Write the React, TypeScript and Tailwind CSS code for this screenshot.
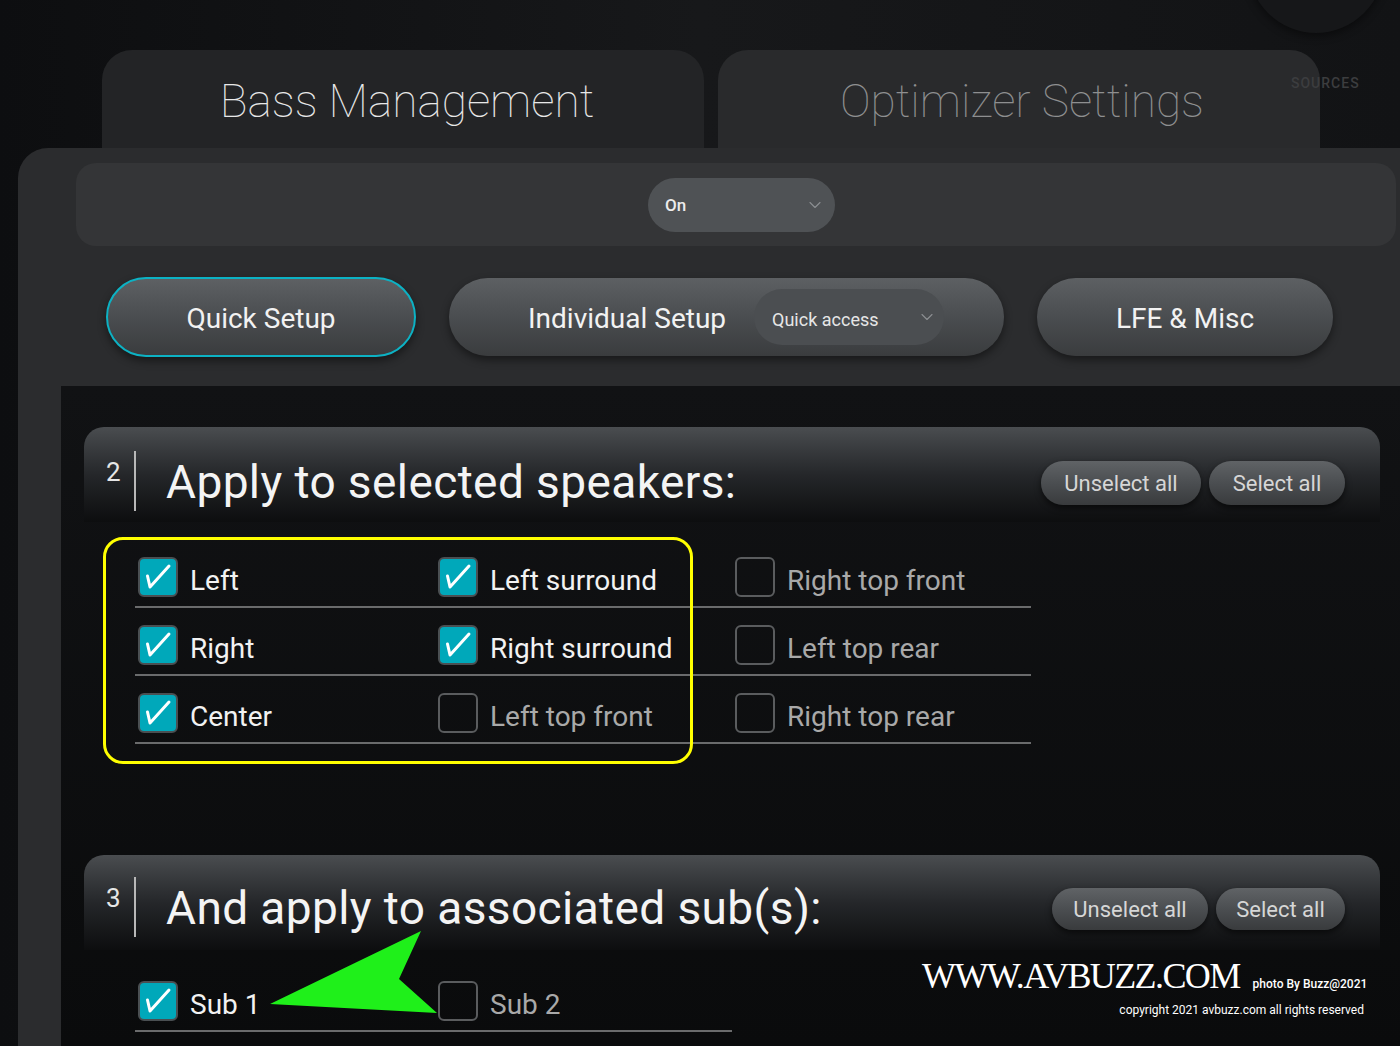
import React from "react";
import { ChevronDown } from "lucide-react";

const font = "font-['Roboto',sans-serif]";

function Check({ checked }: { checked: boolean }) {
  if (checked) {
    return (
      <div className="w-[40px] h-[40px] shrink-0 rounded-[6px] bg-[#00a8ba] border-2 border-[#4a4f52] flex items-center justify-center">
        <svg width="36" height="36" viewBox="0 0 36 36">
          <path d="M7.5 17 L10 28 L29 7" fill="none" stroke="#ffffff" strokeWidth="3" strokeLinecap="round" strokeLinejoin="round" />
        </svg>
      </div>
    );
  }
  return <div className="w-[40px] h-[40px] shrink-0 rounded-[6px] border-2 border-[#5a5c5e]" />;
}

function Cell({ label, checked, w }: { label: string; checked: boolean; w: string }) {
  return (
    <div className={`${w} flex items-center gap-[12px] pl-[3px]`}>
      <Check checked={checked} />
      <span className={`text-[28px] leading-none mt-[8px] ${checked ? "text-[#f2f2f2]" : "text-[#a9a9a9]"}`}>{label}</span>
    </div>
  );
}

function SmallPill({ label, w, h }: { label: string; w: string; h: string }) {
  return (
    <div
      className={`${w} ${h} rounded-full bg-gradient-to-b from-[#606366] via-[#4b4e51] to-[#393b3d] shadow-[0_3px_6px_rgba(0,0,0,0.6)] flex items-center justify-center text-[22px] text-[#d6d6d6]`}
    >
      {label}
    </div>
  );
}

function SectionHeader({ num, title, pt, btnTop, u, s, bh }: { num: string; title: string; pt: string; btnTop: string; u: string; s: string; bh: string }) {
  return (
    <div className={`h-[95px] rounded-t-[20px] bg-gradient-to-b from-[#4a4d50] via-[#25272a] to-[#0d0e0f] ${pt} pl-[22px] pr-[35px] flex items-start`}>
      <div className="w-[28px] text-[26px] leading-none text-[#e6e6e6] mt-[8px]">{num}</div>
      <div className="w-[2px] h-[60px] bg-[#b8b8b8]" />
      <div className="ml-[30px] h-[60px] flex items-center text-[46px] tracking-[0.4px] leading-none text-[#f4f4f4] pt-[2px]">{title}</div>
      <div className={`ml-auto ${btnTop} flex gap-[8px]`}>
        <SmallPill label="Unselect all" w={u} h={bh} />
        <SmallPill label="Select all" w={s} h={bh} />
      </div>
    </div>
  );
}

function BigButton({ children, w, h, cyan, extra }: { children: React.ReactNode; w: string; h: string; cyan?: boolean; extra?: string }) {
  return (
    <div
      className={`${w} ${h} rounded-full bg-gradient-to-b from-[#5d6063] via-[#4a4d50] to-[#3a3c3e] shadow-[0_4px_8px_rgba(0,0,0,0.45)] flex items-center text-[28px] text-[#f2f2f2] pt-[3px] ${cyan ? "border-2 border-[#0cb2c4]" : ""} ${extra ?? "justify-center"}`}
    >
      {children}
    </div>
  );
}

export default function App() {
  const rows: [string, boolean][][] = [
    [["Left", true], ["Left surround", true], ["Right top front", false]],
    [["Right", true], ["Right surround", true], ["Left top rear", false]],
    [["Center", true], ["Left top front", false], ["Right top rear", false]],
  ];
  return (
    <div className={`relative w-[1400px] h-[1046px] overflow-hidden flex flex-col bg-gradient-to-r from-[#0d0e10] via-[#17181a] to-[#121315] ${font}`}>
      {/* decorative background circle */}
      <div className="absolute left-[1248px] top-[-112px] w-[136px] h-[145px] rounded-full bg-[#161719] shadow-[0_3px_8px_rgba(0,0,0,0.45)]" />

      {/* tabs */}
      <div className="relative h-[148px] shrink-0 pt-[50px] pl-[102px] flex gap-[14px]">
        <div className="w-[602px] h-[98px] rounded-t-[30px] bg-[#232426] flex items-center justify-center">
          <span className="text-[46px] font-thin leading-none text-[#e8e8e8] pt-[4px] ml-[8px]">Bass Management</span>
        </div>
        <div className="w-[602px] h-[98px] rounded-t-[30px] bg-[#292a2c] flex items-center justify-center">
          <span className="text-[46px] font-thin leading-none text-[#8e8f90] pt-[4px] ml-[6px]">Optimizer Settings</span>
        </div>
        <div className="absolute left-[1291px] top-[76px] text-[14px] leading-none tracking-[1px] text-[#3c3d3f] font-medium">SOURCES</div>
      </div>

      {/* main panel */}
      <div className="relative ml-[18px] flex-1 rounded-tl-[30px] bg-[#2b2c2e] flex flex-col">
        <div className="pt-[15px] pl-[58px] pr-[4px]">
          <div className="h-[83px] rounded-[20px] bg-[#343537] flex items-center">
            <div className="ml-[572px] w-[187px] h-[54px] rounded-full bg-[#4f5255] flex items-center pl-[17px] pr-[10px]">
              <span className="text-[17px] font-medium text-[#ececec] pt-[3px]">On</span>
              <ChevronDown className="ml-auto" size={20} strokeWidth={1.3} color="#8c8f92" />
            </div>
          </div>
        </div>

        <div className="mt-[31px] pl-[88px] flex items-center gap-[33px]">
          <BigButton w="w-[310px]" h="h-[80px]" cyan>Quick Setup</BigButton>
          <BigButton w="w-[555px]" h="h-[78px]" extra="justify-start pl-[79px]">
            <span>Individual Setup</span>
            <div className="ml-[28px] w-[190px] h-[56px] rounded-full bg-[#4b4e51] flex items-center pl-[18px] pr-[7px] -mt-[3px]">
              <span className="text-[18px] text-[#e6e6e6] pt-[4px]">Quick access</span>
              <ChevronDown className="ml-auto" size={20} strokeWidth={1.3} color="#8c8f92" />
            </div>
          </BigButton>
          <BigButton w="w-[296px]" h="h-[78px]">LFE &amp; Misc</BigButton>
        </div>

        {/* dark content */}
        <div className="mt-[29px] ml-[43px] flex-1 bg-gradient-to-b from-[#111214] to-[#0a0b0c] pl-[23px] pt-[41px]">
          <div className="w-[1296px]">
            <SectionHeader num="2" title="Apply to selected speakers:" pt="pt-[24px]" btnTop="mt-[10px]" u="w-[160px]" s="w-[136px]" bh="h-[44px]" />
            <div className="relative ml-[51px] mt-[18px] w-[896px]">
              {rows.map((r, i) => (
                <div key={i} className="h-[68px] pt-[8px] border-b-2 border-[#6a6b6c] flex items-center">
                  <Cell label={r[0][0]} checked={r[0][1]} w="w-[300px]" />
                  <Cell label={r[1][0]} checked={r[1][1]} w="w-[297px]" />
                  <Cell label={r[2][0]} checked={r[2][1]} w="w-[299px]" />
                </div>
              ))}
              <div className="absolute left-[-32px] top-[-3px] w-[590px] h-[227px] border-[3px] border-[#ffff00] rounded-[20px]" />
            </div>
          </div>

          <div className="w-[1296px] mt-[111px]">
            <SectionHeader num="3" title="And apply to associated sub(s):" pt="pt-[22px]" btnTop="mt-[11px]" u="w-[156px]" s="w-[129px]" bh="h-[42px]" />
            <div className="ml-[51px] mt-[14px] w-[597px]">
              <div className="h-[68px] pt-[8px] border-b-2 border-[#6a6b6c] flex items-center">
                <Cell label="Sub 1" checked w="w-[300px]" />
                <Cell label="Sub 2" checked={false} w="w-[297px]" />
              </div>
            </div>
          </div>
        </div>
      </div>

      {/* annotation arrow */}
      <svg className="absolute left-0 top-0 pointer-events-none" width="1400" height="1046">
        <polygon points="270,1004 421,931 399,979 437,1013" fill="#1ff01a" />
      </svg>

      {/* watermark */}
      <div className="absolute left-[922px] top-[958px] flex items-baseline">
        <span className="font-['Liberation_Serif',serif] text-[36px] leading-none text-white tracking-[-1.6px]">WWW.AVBUZZ.COM</span>
        <span className="ml-[13px] text-[12px] font-medium text-white">photo By Buzz@2021</span>
      </div>
      <div className="absolute right-[36px] top-[1001px] text-[12px] text-white">copyright 2021 avbuzz.com all rights reserved</div>
    </div>
  );
}
